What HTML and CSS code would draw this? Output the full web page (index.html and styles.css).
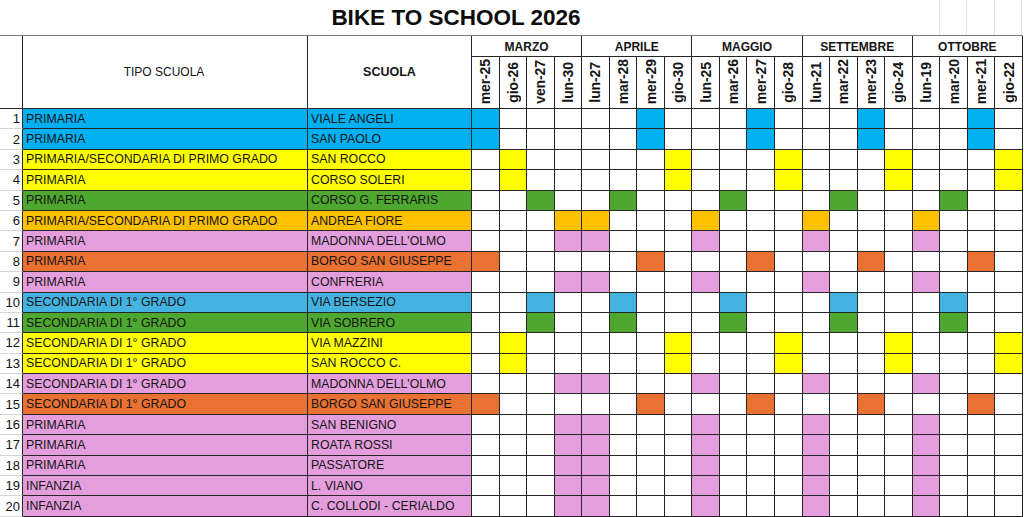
FILE: index.html
```html
<!DOCTYPE html>
<html lang="it">
<head>
<meta charset="utf-8">
<title>Bike to School 2026</title>
<link rel="stylesheet" href="styles.css">
</head>
<body>
<div class="title-row">
  <div class="title">BIKE TO SCHOOL 2026</div>
  <div class="gl"></div><div class="gl"></div><div class="gl"></div><div class="gl"></div>
</div>
<div class="sheet">
  <div class="hn"></div>
  <div class="ht">TIPO SCUOLA</div>
  <div class="hs">SCUOLA</div>
  <div class="m">MARZO</div>
  <div class="m">APRILE</div>
  <div class="m">MAGGIO</div>
  <div class="m">SETTEMBRE</div>
  <div class="m">OTTOBRE</div>
  <div class="d"><span>mer-25</span></div>
  <div class="d"><span>gio-26</span></div>
  <div class="d"><span>ven-27</span></div>
  <div class="d"><span>lun-30</span></div>
  <div class="d"><span>lun-27</span></div>
  <div class="d"><span>mar-28</span></div>
  <div class="d"><span>mer-29</span></div>
  <div class="d"><span>gio-30</span></div>
  <div class="d"><span>lun-25</span></div>
  <div class="d"><span>mar-26</span></div>
  <div class="d"><span>mer-27</span></div>
  <div class="d"><span>gio-28</span></div>
  <div class="d"><span>lun-21</span></div>
  <div class="d"><span>mar-22</span></div>
  <div class="d"><span>mer-23</span></div>
  <div class="d"><span>gio-24</span></div>
  <div class="d"><span>lun-19</span></div>
  <div class="d"><span>mar-20</span></div>
  <div class="d"><span>mer-21</span></div>
  <div class="d"><span>gio-22</span></div>

  <div class="row blue"><span class="n">1</span><span class="t">PRIMARIA</span><span class="s">VIALE ANGELI</span><i class="on"></i><i></i><i></i><i></i><i></i><i></i><i class="on"></i><i></i><i></i><i></i><i class="on"></i><i></i><i></i><i></i><i class="on"></i><i></i><i></i><i></i><i class="on"></i><i></i></div>
  <div class="row blue"><span class="n">2</span><span class="t">PRIMARIA</span><span class="s">SAN PAOLO</span><i class="on"></i><i></i><i></i><i></i><i></i><i></i><i class="on"></i><i></i><i></i><i></i><i class="on"></i><i></i><i></i><i></i><i class="on"></i><i></i><i></i><i></i><i class="on"></i><i></i></div>
  <div class="row yellow"><span class="n">3</span><span class="t">PRIMARIA/SECONDARIA DI PRIMO GRADO</span><span class="s">SAN ROCCO</span><i></i><i class="on"></i><i></i><i></i><i></i><i></i><i></i><i class="on"></i><i></i><i></i><i></i><i class="on"></i><i></i><i></i><i></i><i class="on"></i><i></i><i></i><i></i><i class="on"></i></div>
  <div class="row yellow"><span class="n">4</span><span class="t">PRIMARIA</span><span class="s">CORSO SOLERI</span><i></i><i class="on"></i><i></i><i></i><i></i><i></i><i></i><i class="on"></i><i></i><i></i><i></i><i class="on"></i><i></i><i></i><i></i><i class="on"></i><i></i><i></i><i></i><i class="on"></i></div>
  <div class="row green"><span class="n">5</span><span class="t">PRIMARIA</span><span class="s">CORSO G. FERRARIS</span><i></i><i></i><i class="on"></i><i></i><i></i><i class="on"></i><i></i><i></i><i></i><i class="on"></i><i></i><i></i><i></i><i class="on"></i><i></i><i></i><i></i><i class="on"></i><i></i><i></i></div>
  <div class="row orange"><span class="n">6</span><span class="t">PRIMARIA/SECONDARIA DI PRIMO GRADO</span><span class="s">ANDREA FIORE</span><i></i><i></i><i></i><i class="on"></i><i class="on"></i><i></i><i></i><i></i><i class="on"></i><i></i><i></i><i></i><i class="on"></i><i></i><i></i><i></i><i class="on"></i><i></i><i></i><i></i></div>
  <div class="row pink"><span class="n">7</span><span class="t">PRIMARIA</span><span class="s">MADONNA DELL'OLMO</span><i></i><i></i><i></i><i class="on"></i><i class="on"></i><i></i><i></i><i></i><i class="on"></i><i></i><i></i><i></i><i class="on"></i><i></i><i></i><i></i><i class="on"></i><i></i><i></i><i></i></div>
  <div class="row red"><span class="n">8</span><span class="t">PRIMARIA</span><span class="s">BORGO SAN GIUSEPPE</span><i class="on"></i><i></i><i></i><i></i><i></i><i></i><i class="on"></i><i></i><i></i><i></i><i class="on"></i><i></i><i></i><i></i><i class="on"></i><i></i><i></i><i></i><i class="on"></i><i></i></div>
  <div class="row pink"><span class="n">9</span><span class="t">PRIMARIA</span><span class="s">CONFRERIA</span><i></i><i></i><i></i><i class="on"></i><i class="on"></i><i></i><i></i><i></i><i class="on"></i><i></i><i></i><i></i><i class="on"></i><i></i><i></i><i></i><i class="on"></i><i></i><i></i><i></i></div>
  <div class="row lblue"><span class="n">10</span><span class="t">SECONDARIA DI 1° GRADO</span><span class="s">VIA BERSEZIO</span><i></i><i></i><i class="on"></i><i></i><i></i><i class="on"></i><i></i><i></i><i></i><i class="on"></i><i></i><i></i><i></i><i class="on"></i><i></i><i></i><i></i><i class="on"></i><i></i><i></i></div>
  <div class="row green"><span class="n">11</span><span class="t">SECONDARIA DI 1° GRADO</span><span class="s">VIA SOBRERO</span><i></i><i></i><i class="on"></i><i></i><i></i><i class="on"></i><i></i><i></i><i></i><i class="on"></i><i></i><i></i><i></i><i class="on"></i><i></i><i></i><i></i><i class="on"></i><i></i><i></i></div>
  <div class="row yellow"><span class="n">12</span><span class="t">SECONDARIA DI 1° GRADO</span><span class="s">VIA MAZZINI</span><i></i><i class="on"></i><i></i><i></i><i></i><i></i><i></i><i class="on"></i><i></i><i></i><i></i><i class="on"></i><i></i><i></i><i></i><i class="on"></i><i></i><i></i><i></i><i class="on"></i></div>
  <div class="row yellow"><span class="n">13</span><span class="t">SECONDARIA DI 1° GRADO</span><span class="s">SAN ROCCO C.</span><i></i><i class="on"></i><i></i><i></i><i></i><i></i><i></i><i class="on"></i><i></i><i></i><i></i><i class="on"></i><i></i><i></i><i></i><i class="on"></i><i></i><i></i><i></i><i class="on"></i></div>
  <div class="row pink"><span class="n">14</span><span class="t">SECONDARIA DI 1° GRADO</span><span class="s">MADONNA DELL'OLMO</span><i></i><i></i><i></i><i class="on"></i><i class="on"></i><i></i><i></i><i></i><i class="on"></i><i></i><i></i><i></i><i class="on"></i><i></i><i></i><i></i><i class="on"></i><i></i><i></i><i></i></div>
  <div class="row red"><span class="n">15</span><span class="t">SECONDARIA DI 1° GRADO</span><span class="s">BORGO SAN GIUSEPPE</span><i class="on"></i><i></i><i></i><i></i><i></i><i></i><i class="on"></i><i></i><i></i><i></i><i class="on"></i><i></i><i></i><i></i><i class="on"></i><i></i><i></i><i></i><i class="on"></i><i></i></div>
  <div class="row pink"><span class="n">16</span><span class="t">PRIMARIA</span><span class="s">SAN BENIGNO</span><i></i><i></i><i></i><i class="on"></i><i class="on"></i><i></i><i></i><i></i><i class="on"></i><i></i><i></i><i></i><i class="on"></i><i></i><i></i><i></i><i class="on"></i><i></i><i></i><i></i></div>
  <div class="row pink"><span class="n">17</span><span class="t">PRIMARIA</span><span class="s">ROATA ROSSI</span><i></i><i></i><i></i><i class="on"></i><i class="on"></i><i></i><i></i><i></i><i class="on"></i><i></i><i></i><i></i><i class="on"></i><i></i><i></i><i></i><i class="on"></i><i></i><i></i><i></i></div>
  <div class="row pink"><span class="n">18</span><span class="t">PRIMARIA</span><span class="s">PASSATORE</span><i></i><i></i><i></i><i class="on"></i><i class="on"></i><i></i><i></i><i></i><i class="on"></i><i></i><i></i><i></i><i class="on"></i><i></i><i></i><i></i><i class="on"></i><i></i><i></i><i></i></div>
  <div class="row pink"><span class="n">19</span><span class="t">INFANZIA</span><span class="s">L. VIANO</span><i></i><i></i><i></i><i class="on"></i><i class="on"></i><i></i><i></i><i></i><i class="on"></i><i></i><i></i><i></i><i class="on"></i><i></i><i></i><i></i><i class="on"></i><i></i><i></i><i></i></div>
  <div class="row pink"><span class="n">20</span><span class="t">INFANZIA</span><span class="s">C. COLLODI - CERIALDO</span><i></i><i></i><i></i><i class="on"></i><i class="on"></i><i></i><i></i><i></i><i class="on"></i><i></i><i></i><i></i><i class="on"></i><i></i><i></i><i></i><i class="on"></i><i></i><i></i><i></i></div>
</div>
</body>
</html>
```

FILE: styles.css
```css
html, body {
  margin: 0;
  padding: 0;
  background: #ffffff;
}

body {
  font-family: "Liberation Sans", Arial, sans-serif;
  color: #141414;
  width: 1024px;
  overflow: hidden;
}

.title-row {
  display: flex;
  height: 35px;
}

.title {
  width: 912px;
  text-align: center;
  font-weight: bold;
  font-size: 22.5px;
  line-height: 35px;
  color: #0d0d0d;
}

.gl {
  width: 27.55px;
  box-sizing: border-box;
  border-right: 1px solid #e4e4e4;
}

.sheet {
  display: grid;
  width: 1023px;
  grid-template-columns: 23px 285px 164px repeat(20, 27.55px);
  grid-template-rows: 21px 52px repeat(20, 20.4px);
  border-top: 1px solid #7d7d7d;
}

.row {
  display: contents;
}

.sheet > div:not(.row),
.row > * {
  box-sizing: border-box;
  border-right: 1px solid #262626;
  border-bottom: 1px solid #262626;
  overflow: hidden;
  white-space: nowrap;
  display: flex;
  align-items: center;
  min-width: 0;
  background: #ffffff;
}

.hn, .ht, .hs {
  grid-row: span 2;
}

.sheet > .hn,
.row > .n {
  border-bottom-color: #d6d6d6;
}

.ht {
  justify-content: center;
  font-size: 12px;
  padding-right: 2px;
}

.hs {
  justify-content: center;
  font-weight: bold;
  font-size: 12.5px;
}

.m {
  grid-column: span 4;
  justify-content: center;
  font-weight: bold;
  font-size: 12px;
  padding-top: 2px;
}

.sheet > .d {
  justify-content: center;
  align-items: flex-end;
  padding-bottom: 1px;
}

.d span {
  writing-mode: vertical-rl;
  transform: rotate(180deg);
  font-weight: bold;
  font-size: 14px;
  line-height: 1;
  letter-spacing: -0.1px;
}

.row > .n {
  justify-content: flex-end;
  padding-right: 2px;
  font-size: 13px;
}

.row > .t,
.row > .s {
  padding-left: 3px;
  font-size: 12.3px;
}

.row.blue > .t, .row.blue > .s, .row.blue > .on { background: #00b0f0; }
.row.yellow > .t, .row.yellow > .s, .row.yellow > .on { background: #ffff00; }
.row.green > .t, .row.green > .s, .row.green > .on { background: #4ea72e; }
.row.orange > .t, .row.orange > .s, .row.orange > .on { background: #ffc000; }
.row.pink > .t, .row.pink > .s, .row.pink > .on { background: #e49edd; }
.row.red > .t, .row.red > .s, .row.red > .on { background: #e97132; }
.row.lblue > .t, .row.lblue > .s, .row.lblue > .on { background: #44b3e1; }
```
